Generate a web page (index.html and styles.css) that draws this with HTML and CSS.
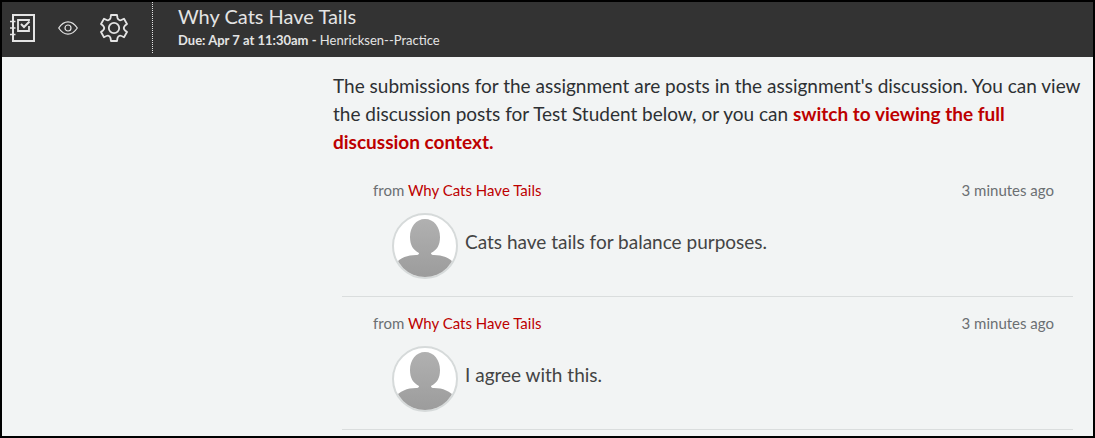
FILE: index.html
```html
<!DOCTYPE html>
<html lang="en">
<head>
    <meta charset="utf-8">
    <title>Why Cats Have Tails</title>
    <link rel="stylesheet" href="styles.css">
</head>
<body>
    <header class="topbar">
        <nav class="tools">
            <a class="tool" href="#" aria-label="Gradebook">
                <svg width="26" height="30" viewBox="0 0 26 30" fill="none" stroke="#e4e4e4" stroke-width="2">
                    <path d="M3 2H24V28H3Z"/>
                    <path d="M0 8.500H5.500M0 15H5.500M0 21.500H5.500" stroke-width="1.500"/>
                    <path d="M16 7H8V18H19V13" stroke-width="1.800"/>
                    <path d="M16 7H19V8" stroke-width="1.800"/>
                    <path d="M11 11L14 14L19.500 8.500"/>
                </svg>
            </a>
            <button class="tool" type="button" aria-label="Hide student names">
                <svg width="20" height="14" viewBox="0 0 20 14" fill="none" stroke="#e4e4e4" stroke-width="1.200">
                    <path d="M.7 7C3.500 2.800 6.500.8 10 .8S16.500 2.800 19.300 7C16.500 11.200 13.500 13.200 10 13.200S3.500 11.200.7 7Z"/>
                    <circle cx="10" cy="7" r="3"/>
                </svg>
            </button>
            <button class="tool" type="button" aria-label="Settings">
                <svg width="28" height="28" viewBox="0 0 28 28" fill="none" stroke="#e4e4e4" stroke-width="1.800" stroke-linejoin="round">
                    <path d="M11 1H17L17.500 4Q18 6 20 6.300Q21 6.400 24 4.800L27 10L24.800 11.800Q22.800 14 24.800 16.200L27 18L24 23.200Q21 21.600 20 21.700Q18 22 17.500 24L17 27H11L10.500 24Q10 22 8 21.700Q7 21.600 4 23.200L1 18L3.200 16.200Q5.200 14 3.200 11.800L1 10L4 4.800Q7 6.400 8 6.300Q10 6 10.500 4Z"/>
                    <circle cx="14" cy="14" r="5.200"/>
                </svg>
            </button>
        </nav>
        <div class="assignment">
            <h1 class="assignment-title">Why Cats Have Tails</h1>
            <p class="assignment-info"><strong>Due: Apr 7 at 11:30am -</strong> Henricksen--Practice</p>
        </div>
    </header>

    <main class="content">
        <p class="intro">The submissions for the assignment are posts in the assignment's discussion. You can view the discussion posts for Test Student below, or you can <a href="#">switch to viewing the full discussion context.</a></p>

        <article class="post">
            <div class="post-header">
                <span>from <a href="#">Why Cats Have Tails</a></span>
                <time>3 minutes ago</time>
            </div>
            <div class="post-body">
                <svg class="avatar" viewBox="0 0 62 62">
                    <defs>
                        <linearGradient id="shade" gradientUnits="userSpaceOnUse" x1="0" y1="0" x2="0" y2="62">
                            <stop offset="0" stop-color="#b2b2b2"/>
                            <stop offset="1" stop-color="#9c9c9c"/>
                        </linearGradient>
                    </defs>
                    <path fill="url(#shade)" d="M31 4C40 4 46 12 46 22C46 30 43 35 37 38Q37 40 40 40C49 40 56 43 62 50V62H0V50C6 43 13 40 22 40Q25 40 25 38C19 35 16 30 16 22C16 12 22 4 31 4Z"/>
                </svg>
                <p>Cats have tails for balance purposes.</p>
            </div>
        </article>

        <article class="post">
            <div class="post-header">
                <span>from <a href="#">Why Cats Have Tails</a></span>
                <time>3 minutes ago</time>
            </div>
            <div class="post-body">
                <svg class="avatar" viewBox="0 0 62 62">
                    <path fill="url(#shade)" d="M31 4C40 4 46 12 46 22C46 30 43 35 37 38Q37 40 40 40C49 40 56 43 62 50V62H0V50C6 43 13 40 22 40Q25 40 25 38C19 35 16 30 16 22C16 12 22 4 31 4Z"/>
                </svg>
                <p>I agree with this.</p>
            </div>
        </article>
    </main>
</body>
</html>
```
FILE: styles.css
```css
* {
    box-sizing: border-box;
}
body {
    margin: 0;
    min-height: 100vh;
    border: 2px solid #000;
    background-color: #f2f4f4;
    font-family: Lato, sans-serif;
    color: #2d3033;
}
h1, p {
    margin: 0;
}
a {
    color: #bd0000;
    text-decoration: none;
}
.topbar {
    display: flex;
    height: 55px;
    background-color: #333;
    color: #e4e4e4;
}
.tools {
    display: flex;
    align-items: center;
    gap: 22px;
    width: 151px;
    height: 51px;
    padding-left: 8px;
    border-right: 1px dotted #e4e4e4;
}
.tool {
    display: flex;
    padding: 0;
    border: none;
    background: none;
    cursor: pointer;
}
.assignment {
    padding-left: 25px;
}
.assignment-title {
    font-size: 20px;
    font-weight: normal;
    line-height: 28px;
}
.assignment-info {
    font-size: 13px;
    line-height: 20px;
}
.content {
    padding: 15px 6px 0 331px;
}
.intro {
    margin-bottom: 8px;
    font-size: 19px;
    line-height: 28px;
}
.intro a {
    font-weight: bold;
}
.post {
    margin: 0 14px 0 9px;
    padding: 16px 19px 17px 31px;
    border-bottom: 1px solid #dadddd;
}
.post-header {
    display: flex;
    justify-content: space-between;
    font-size: 15px;
    line-height: 20px;
    color: #6b6f72;
}
.post-body {
    display: flex;
    align-items: center;
    gap: 7px;
    padding: 13px 0 0 19px;
    font-size: 19px;
    line-height: 28px;
    color: #444;
}
.post-body p {
    padding-bottom: 8px;
}
.avatar {
    width: 66px;
    height: 66px;
    border: 2px solid #d6dada;
    border-radius: 50%;
    background-color: #fff;
}
```
